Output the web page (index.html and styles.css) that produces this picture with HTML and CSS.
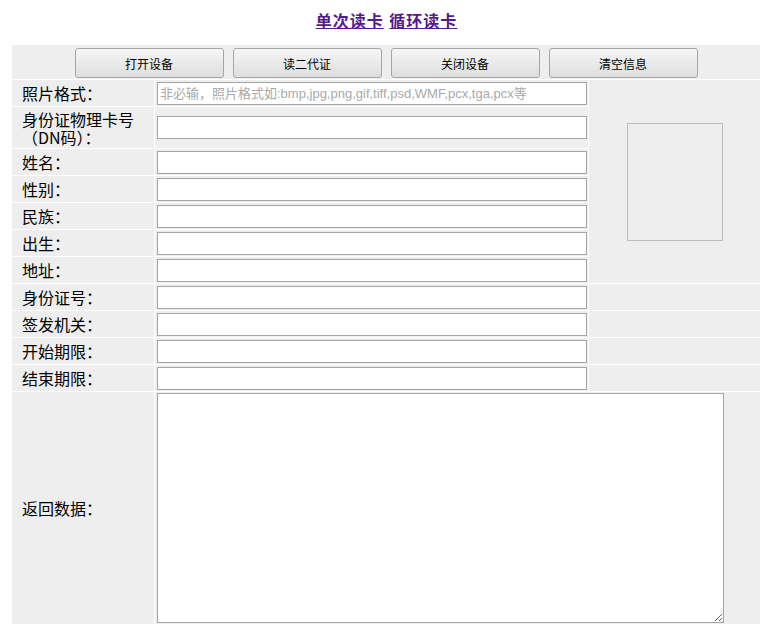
FILE: index.html
```html
<!DOCTYPE html>
<html lang="zh-CN">
<head>
<meta charset="utf-8">
<title>读卡</title>
<link rel="stylesheet" href="styles.css">
</head>
<body>
<div class="title">
  <a class="nav-link" href="#">单次读卡</a>
  <a class="nav-link" href="#">循环读卡</a>
</div>
<table class="form-table">
  <colgroup>
    <col class="c1"><col class="c2"><col class="c3">
  </colgroup>
  <tr class="btn-row">
    <td colspan="3">
      <div class="btns">
        <button class="btn">打开设备</button>
        <button class="btn">读二代证</button>
        <button class="btn">关闭设备</button>
        <button class="btn">清空信息</button>
      </div>
    </td>
  </tr>
  <tr class="row">
    <td class="label">照片格式：</td>
    <td class="field"><input class="inp" type="text" placeholder="非必输，照片格式如:bmp,jpg,png,gif,tiff,psd,WMF,pcx,tga,pcx等"></td>
    <td class="photo-cell" rowspan="7"><div class="photo"></div></td>
  </tr>
  <tr class="row tall">
    <td class="label">身份证物理卡号（DN码）：</td>
    <td class="field"><input class="inp" type="text"></td>
  </tr>
  <tr class="row">
    <td class="label">姓名：</td>
    <td class="field"><input class="inp" type="text"></td>
  </tr>
  <tr class="row">
    <td class="label">性别：</td>
    <td class="field"><input class="inp" type="text"></td>
  </tr>
  <tr class="row">
    <td class="label">民族：</td>
    <td class="field"><input class="inp" type="text"></td>
  </tr>
  <tr class="row">
    <td class="label">出生：</td>
    <td class="field"><input class="inp" type="text"></td>
  </tr>
  <tr class="row">
    <td class="label">地址：</td>
    <td class="field"><input class="inp" type="text"></td>
  </tr>
  <tr class="row">
    <td class="label">身份证号：</td>
    <td class="field"><input class="inp" type="text"></td>
    <td></td>
  </tr>
  <tr class="row">
    <td class="label">签发机关：</td>
    <td class="field"><input class="inp" type="text"></td>
    <td></td>
  </tr>
  <tr class="row">
    <td class="label">开始期限：</td>
    <td class="field"><input class="inp" type="text"></td>
    <td></td>
  </tr>
  <tr class="row">
    <td class="label">结束期限：</td>
    <td class="field"><input class="inp" type="text"></td>
    <td></td>
  </tr>
  <tr class="data-row">
    <td class="label">返回数据：</td>
    <td class="field" colspan="2"><textarea class="data"></textarea></td>
  </tr>
</table>
</body>
</html>
```

FILE: styles.css
```css
html, body {
  margin: 0;
  padding: 0;
  background: #fff;
}
body {
  margin: 8px;
  font-family: "Noto Sans CJK SC", "Liberation Sans", sans-serif;
  color: #000;
}
.title {
  height: 36px;
  line-height: 24px;
  text-align: center;
  font-size: 16px;
}
.nav-link {
  color: #551a8b;
  text-decoration: underline;
  font-weight: bold;
  letter-spacing: 1px;
  font-family: "Noto Sans CJK SC", serif;
  margin: 0 1px;
}
.form-table {
  width: 750px;
  margin: 0 0 0 3px;
  border-collapse: separate;
  border-spacing: 1px;
  table-layout: fixed;
}
.c1 { width: 142px; }
.c2 { width: 433px; }
.c3 { width: 171px; }
.form-table td {
  background: #eeeeee;
  padding: 0;
  vertical-align: middle;
}
.btn-row td {
  height: 33px;
  padding-bottom: 1px;
  vertical-align: bottom;
}
.btns {
  display: flex;
  justify-content: center;
  gap: 9px;
}
.btn {
  width: 149px;
  height: 30px;
  border: 1px solid #a6a6a6;
  border-radius: 3px;
  background: linear-gradient(#f6f6f6, #dedede);
  font-family: "Noto Sans CJK SC", "Liberation Sans", sans-serif;
  font-size: 12px;
  color: #000;
  padding: 0;
}
.row td {
  height: 26px;
}
.label {
  padding-left: 10px !important;
  font-size: 16px;
  line-height: 18px;
}
.tall td {
  height: 41px;
}
.field {
  padding-left: 2px !important;
}
.inp {
  display: block;
  box-sizing: border-box;
  width: 430px;
  height: 23px;
  margin: 0;
  border: 1px solid #a5a5a5;
  background: #fff;
  padding: 0 2px;
  font-family: "Liberation Sans", "Noto Sans CJK SC", sans-serif;
  font-size: 13px;
  outline: none;
}
.inp::placeholder {
  color: #a9a9a9;
}
.photo-cell {
  text-align: center;
}
.photo {
  display: inline-block;
  vertical-align: middle;
  width: 96px;
  height: 118px;
  box-sizing: border-box;
  border: 1px solid #bcbcbc;
}
.data-row td {
  height: 232px;
}
.data {
  display: block;
  box-sizing: border-box;
  width: 567px;
  height: 230px;
  margin: 0;
  border: 1px solid #a5a5a5;
  background: #fff;
  resize: both;
  font-family: "Liberation Sans", "Noto Sans CJK SC", sans-serif;
  font-size: 12px;
}
```
